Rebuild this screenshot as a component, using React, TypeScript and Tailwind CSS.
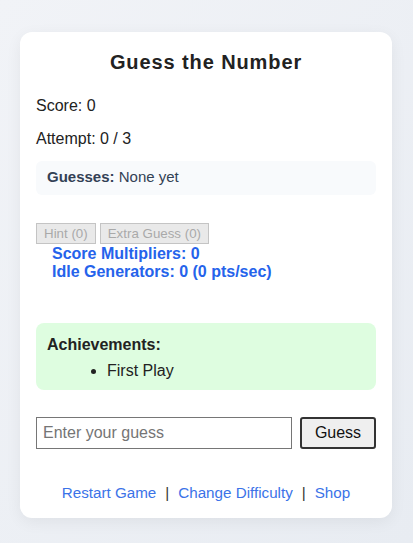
import React, { useState } from 'react';

export default function App() {
  const [guess, setGuess] = useState('');

  return (
    <div className="min-h-[543px] w-full bg-gradient-to-br from-[#f1f3f7] to-[#e8ecf2] pt-8 pb-6 font-['Liberation_Sans',Arial,sans-serif]">
      <div className="ml-5 w-[372px] rounded-xl bg-white px-4 pt-[18px] pb-[17px] shadow-[0_4px_16px_rgba(0,0,0,0.06)]">
        {/* title */}
        <h2 className="text-center text-[20px] leading-[24px] font-bold tracking-[0.9px] text-[#222]">
          Guess the Number
        </h2>

        <p className="mt-[23px] text-[16px] leading-[18px] text-[#222]">Score: 0</p>
        <p className="mt-[15px] text-[16px] leading-[18px] text-[#222]">Attempt: 0 / 3</p>

        <div className="mt-[13px] rounded-md bg-[#f8fafc] px-[11px] pt-[7px] pb-[9px] text-[15px] leading-[18px] text-[#334155]">
          <strong>Guesses:</strong> None yet
        </div>

        {/* shop items */}
        <div className="mt-[28px] flex gap-1">
          <button
            disabled
            className="h-[21px] border border-[#c4c4c4] bg-[#e9e9e9] px-[7px] text-[13.33px] leading-[19px] text-[#a9a9a9]"
          >
            Hint (0)
          </button>
          <button
            disabled
            className="h-[21px] border border-[#c4c4c4] bg-[#e9e9e9] px-[7px] text-[13.33px] leading-[19px] text-[#a9a9a9]"
          >
            Extra Guess (0)
          </button>
        </div>
        <div className="mt-px pl-4 text-[16px] leading-[18px] font-bold text-[#2563eb]">
          <div>Score Multipliers: 0</div>
          <div>Idle Generators: 0 (0 pts/sec)</div>
        </div>

        <div className="mt-[42px] rounded-lg bg-[#defde0] px-[11px] pt-[13px] pb-[10px] text-[#222]">
          <div className="text-[16px] leading-[18px] font-bold">Achievements:</div>
          <ul className="mt-2 list-disc pl-[60px] text-[16px] leading-[18px]">
            <li>First Play</li>
          </ul>
        </div>

        {/* guess input */}
        <div className="mt-[27px] flex gap-2">
          <input
            type="number"
            value={guess}
            onChange={e => setGuess(e.target.value)}
            placeholder="Enter your guess"
            className="h-8 w-[256px] border border-[#767676] px-[6px] text-[16px] text-[#222] placeholder:text-[#757575] focus:outline-none"
          />
          <button className="h-8 w-[76px] rounded-[3px] border-2 border-[#333] bg-[#efefef] text-[16px] text-[#111]">
            Guess
          </button>
        </div>

        {/* footer links */}
        <div className="mt-[35px] flex items-center justify-center text-[15.2px] leading-[17px]">
          <a href="#" className="text-[#3b73e8]">Restart Game</a>
          <span className="mx-[9px] text-[#333]">|</span>
          <a href="#" className="text-[#3b73e8]">Change Difficulty</a>
          <span className="mx-[9px] text-[#333]">|</span>
          <a href="#" className="text-[#3b73e8]">Shop</a>
        </div>
      </div>
    </div>
  );
}
